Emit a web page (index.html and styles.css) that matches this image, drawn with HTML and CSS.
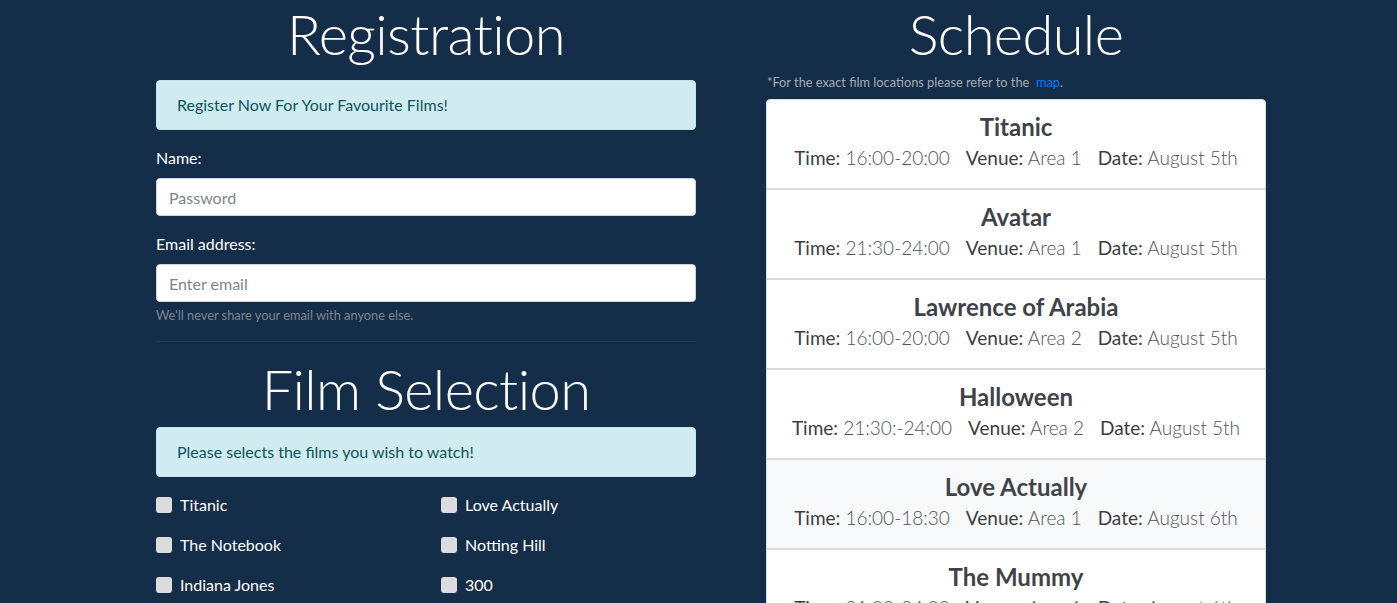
FILE: index.html
```html
<!DOCTYPE html>
<html lang="en">
<head>
<meta charset="utf-8">
<title>Film Festival</title>
<link rel="stylesheet" href="styles.css">
</head>
<body>
<div class="page">
  <section class="col-left">
    <h1 class="display">Registration</h1>
    <div class="alert">Register Now For Your Favourite Films!</div>
    <form class="form">
      <div class="form-group">
        <label class="label" for="name">Name:</label>
        <input class="input" id="name" type="text" placeholder="Password">
      </div>
      <div class="form-group">
        <label class="label" for="email">Email address:</label>
        <input class="input" id="email" type="email" placeholder="Enter email">
        <small class="help">We'll never share your email with anyone else.</small>
      </div>
    </form>
    <hr class="rule">
    <h1 class="display display-second">Film Selection</h1>
    <div class="alert">Please selects the films you wish to watch!</div>
    <div class="films">
      <label class="check"><span class="box"></span>Titanic</label>
      <label class="check"><span class="box"></span>Love Actually</label>
      <label class="check"><span class="box"></span>The Notebook</label>
      <label class="check"><span class="box"></span>Notting Hill</label>
      <label class="check"><span class="box"></span>Indiana Jones</label>
      <label class="check"><span class="box"></span>300</label>
    </div>
  </section>
  <section class="col-right">
    <h1 class="display display-right">Schedule</h1>
    <p class="note">*For the exact film locations please refer to the&nbsp; <a class="link" href="#">map</a>.</p>
    <ul class="list">
      <li class="item">
        <h4 class="title">Titanic</h4>
        <p class="details"><span><b>Time:</b> 16:00-20:00</span><span><b>Venue:</b> Area 1</span><span><b>Date:</b> August 5th</span></p>
      </li>
      <li class="item">
        <h4 class="title">Avatar</h4>
        <p class="details"><span><b>Time:</b> 21:30-24:00</span><span><b>Venue:</b> Area 1</span><span><b>Date:</b> August 5th</span></p>
      </li>
      <li class="item">
        <h4 class="title">Lawrence of Arabia</h4>
        <p class="details"><span><b>Time:</b> 16:00-20:00</span><span><b>Venue:</b> Area 2</span><span><b>Date:</b> August 5th</span></p>
      </li>
      <li class="item">
        <h4 class="title">Halloween</h4>
        <p class="details"><span><b>Time:</b> 21:30:-24:00</span><span><b>Venue:</b> Area 2</span><span><b>Date:</b> August 5th</span></p>
      </li>
      <li class="item item-hover">
        <h4 class="title">Love Actually</h4>
        <p class="details"><span><b>Time:</b> 16:00-18:30</span><span><b>Venue:</b> Area 1</span><span><b>Date:</b> August 6th</span></p>
      </li>
      <li class="item">
        <h4 class="title">The Mummy</h4>
        <p class="details"><span><b>Time:</b> 21:00-24:00</span><span><b>Venue:</b> Area 1</span><span><b>Date:</b> August 6th</span></p>
      </li>
    </ul>
  </section>
</div>
</body>
</html>
```

FILE: styles.css
```css
* { box-sizing: border-box; }
html, body {
  margin: 0;
  padding: 0;
}
body {
  background: #142d48;
  color: #fff;
  font-family: Lato, "Open Sans", "Liberation Sans", sans-serif;
  font-size: 16px;
  line-height: 1.5;
}
.page {
  display: flex;
  gap: 70px;
  padding-left: 156px;
  align-items: flex-start;
}
.col-left { width: 540px; }
.col-right { width: 500px; }

.display {
  margin: 0 0 13px;
  font-size: 56px;
  font-weight: 300;
  line-height: 67px;
  letter-spacing: -0.6px;
  text-align: center;
  color: #fff;
}
.display-second { margin: 13px 0 5px; }
.display-right { margin-bottom: 6px; }

.alert {
  background: #d1ecf1;
  border: 1px solid #bee5eb;
  color: #0c5460;
  border-radius: 4px;
  padding: 12px 20px;
  margin-bottom: 16px;
  line-height: 24px;
}

.form { margin: 0; }
.form-group { margin-bottom: 16px; }
.label {
  display: block;
  margin-bottom: 8px;
  line-height: 24px;
  color: #fff;
}
.input {
  display: block;
  width: 100%;
  height: 38px;
  padding: 6px 12px;
  font: inherit;
  line-height: 24px;
  color: #495057;
  background: #fff;
  border: 1px solid #ced4da;
  border-radius: 4px;
}
.input::placeholder { color: #7c858d; }
.help {
  display: block;
  margin-top: 4px;
  font-size: 12.8px;
  line-height: 19px;
  color: #7d8791;
}
.rule {
  margin: 0;
  border: 0;
  border-top: 1px solid rgba(255, 255, 255, 0.06);
}

.films {
  display: grid;
  grid-template-columns: 1fr 1fr;
  column-gap: 30px;
  row-gap: 16px;
}
.check {
  display: flex;
  align-items: center;
  gap: 8px;
  line-height: 24px;
  color: #fff;
}
.box {
  width: 16px;
  height: 16px;
  border-radius: 3px;
  background: #dcdcdc;
  flex: none;
}

.note {
  margin: 0 0 7px 1px;
  font-size: 12.8px;
  line-height: 19px;
  color: #a3abb3;
}
.link { color: #007bff; text-decoration: none; }

.list {
  list-style: none;
  margin: 0;
  padding: 0;
}
.item {
  background: #fff;
  border: 1px solid #dcdcdc;
  padding: 12px 10px 15px;
  text-align: center;
  color: #444;
}
.item:first-child { border-radius: 4px 4px 0 0; }
.item-hover { background: #f8f9fa; }
.title {
  margin: 0 0 2px;
  font-size: 24px;
  font-weight: 700;
  line-height: 29px;
  color: #3f4349;
}
.details {
  margin: 0;
  font-size: 19px;
  line-height: 30px;
  font-weight: 300;
  color: #4f545a;
  display: flex;
  justify-content: center;
  gap: 16px;
}
.details b {
  font-weight: 400;
  color: #3a3e44;
}
```
